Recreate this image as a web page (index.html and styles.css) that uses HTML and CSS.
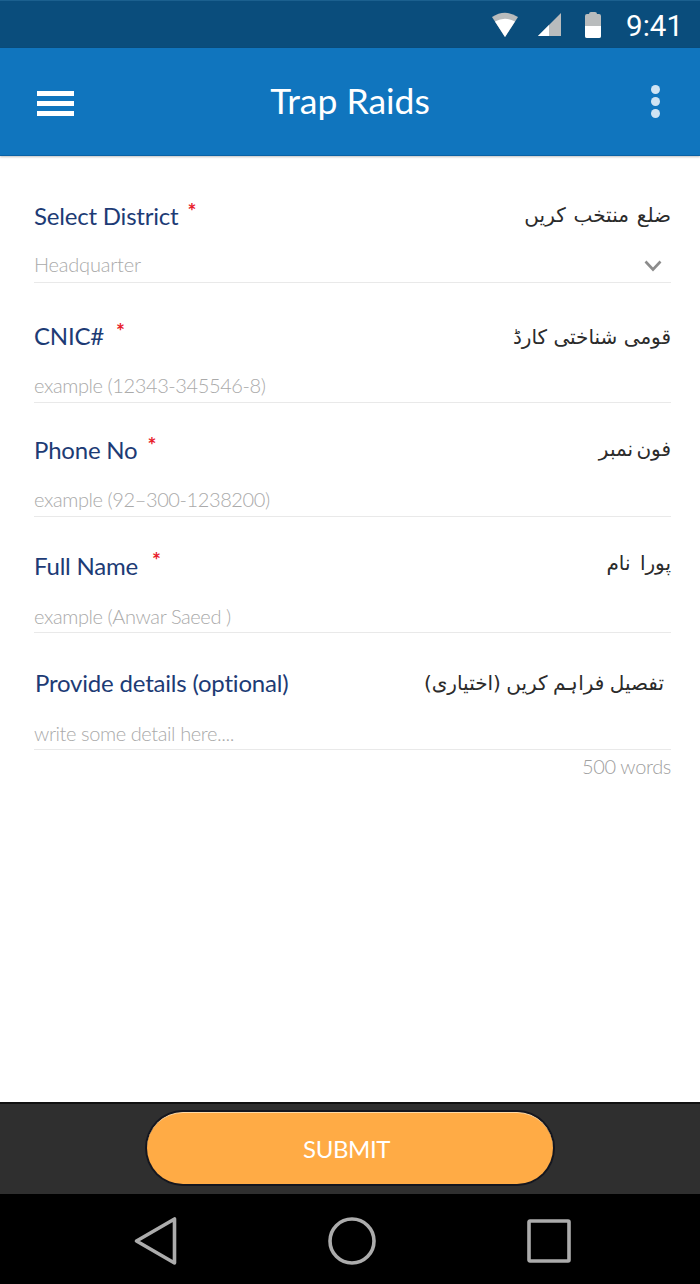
FILE: index.html
```html
<!DOCTYPE html>
<html lang="en">
<head>
    <meta charset="UTF-8">
    <meta name="viewport" content="width=device-width, initial-scale=1.0">
    <title>Trap Raids</title>
    <link rel="stylesheet" href="styles.css">
</head>
<body>
    <div class="status-bar">
        <svg class="wifi" width="26" height="25" viewBox="0 0 26 25">
            <path d="M0 5 Q13 -3.5 26 5 L13 25 Z" fill="#b9bcbd"/>
            <path d="M3 9.5 Q13 4 23 9.5 L13 25 Z" fill="#fff"/>
        </svg>
        <svg class="signal" width="23" height="23" viewBox="0 0 23 23">
            <path d="M23 0 V23 H0 Z" fill="#b9bcbd"/>
            <path d="M11 12 V23 H0 Z" fill="#fff"/>
        </svg>
        <svg class="battery" width="16" height="26" viewBox="0 0 16 26">
            <path d="M4 2 Q4 0 6 0 H10 Q12 0 12 2 H14 Q16 2 16 4 V24 Q16 26 14 26 H2 Q0 26 0 24 V4 Q0 2 2 2 Z" fill="#b9bcbd"/>
            <path d="M0 14 H16 V24 Q16 26 14 26 H2 Q0 26 0 24 Z" fill="#fff"/>
        </svg>
        <span class="time">9:41</span>
    </div>

    <header>
        <button type="button" class="menu" aria-label="Menu">
            <span></span>
            <span></span>
            <span></span>
        </button>
        <h1>Trap Raids</h1>
        <button type="button" class="more" aria-label="More options">
            <span></span>
            <span></span>
            <span></span>
        </button>
    </header>

    <main>
        <form id="raidForm">
            <div class="field district">
                <div class="label-row">
                    <label for="district">Select District</label>
                    <span class="required">*</span>
                    <span class="urdu" lang="ur" dir="rtl">ضلع منتخب کریں</span>
                </div>
                <div class="input-row">
                    <input type="text" id="district" placeholder="Headquarter" readonly>
                    <svg class="chevron" width="18" height="12" viewBox="0 0 18 12">
                        <path d="M1.5 1.5 L9 9.5 L16.5 1.5" fill="none" stroke="#8c8c8c" stroke-width="2.6"/>
                    </svg>
                </div>
            </div>

            <div class="field cnic">
                <div class="label-row">
                    <label for="cnic">CNIC#</label>
                    <span class="required">*</span>
                    <span class="urdu" lang="ur" dir="rtl">قومی شناختی کارڈ</span>
                </div>
                <div class="input-row">
                    <input type="text" id="cnic" placeholder="example (12343-345546-8)">
                </div>
            </div>

            <div class="field phone">
                <div class="label-row">
                    <label for="phone">Phone No</label>
                    <span class="required">*</span>
                    <span class="urdu" lang="ur" dir="rtl">فون نمبر</span>
                </div>
                <div class="input-row">
                    <input type="text" id="phone" placeholder="example (92–300-1238200)">
                </div>
            </div>

            <div class="field name">
                <div class="label-row">
                    <label for="fullName">Full Name</label>
                    <span class="required">*</span>
                    <span class="urdu" lang="ur" dir="rtl">پورا نام</span>
                </div>
                <div class="input-row">
                    <input type="text" id="fullName" placeholder="example (Anwar Saeed )">
                </div>
            </div>

            <div class="field details">
                <div class="label-row">
                    <label for="details">Provide details (optional)</label>
                    <span class="urdu" lang="ur" dir="rtl">تفصیل فراہم کریں (اختیاری)</span>
                </div>
                <div class="input-row">
                    <input type="text" id="details" placeholder="write some detail here....">
                </div>
            </div>
            <p class="word-count">500 words</p>
        </form>
    </main>

    <div class="submit-bar">
        <button type="submit" form="raidForm" class="submit">SUBMIT</button>
    </div>

    <nav>
        <svg class="back" width="44" height="50" viewBox="0 0 44 50">
            <path d="M40.5 3 V47 L2.5 25 Z" fill="none" stroke="#acacac" stroke-width="3.6" stroke-linejoin="round"/>
        </svg>
        <svg class="home" width="50" height="50" viewBox="0 0 50 50">
            <circle cx="25" cy="25" r="22" fill="none" stroke="#acacac" stroke-width="3.6"/>
        </svg>
        <svg class="recent" width="46" height="46" viewBox="0 0 46 46">
            <rect x="3" y="3" width="40" height="40" rx="1" fill="none" stroke="#acacac" stroke-width="3.6"/>
        </svg>
    </nav>
</body>
</html>
```
FILE: styles.css
```css
* {
    box-sizing: border-box;
}
body {
    font-family: Lato, sans-serif;
    margin: 0;
    height: 1284px;
    display: flex;
    flex-direction: column;
    background-color: #ffffff;
}
button {
    border: none;
    padding: 0;
    background: none;
    cursor: pointer;
}
.status-bar {
    height: 48px;
    padding: 0 17px 0 0;
    display: flex;
    align-items: center;
    justify-content: flex-end;
    background-color: #0a4d7c;
    border-top: 1px solid #1b608f;
}
.wifi {
    margin-right: 20px;
}
.signal {
    margin-right: 24px;
}
.battery {
    margin-right: 25px;
}
.time {
    font-family: Roboto, sans-serif;
    font-size: 29.5px;
    color: #ffffff;
    margin-top: 2px;
}
header {
    height: 108px;
    padding: 0 40px 0 37px;
    display: grid;
    grid-template-columns: 37px 1fr 37px;
    align-items: center;
    background-color: #1075be;
    border-bottom: 1px solid #0a62a5;
    box-shadow: 0 1px 2px rgba(0, 0, 0, 0.25);
}
h1 {
    margin: 0 0 2px 3px;
    font-size: 35.5px;
    font-weight: 400;
    color: #ffffff;
    text-align: center;
}
.menu {
    width: 37px;
    display: flex;
    flex-direction: column;
    gap: 5px;
    margin-top: 4px;
}
.menu span {
    height: 5px;
    background-color: #ffffff;
}
.more {
    display: flex;
    flex-direction: column;
    align-items: flex-end;
    gap: 3px;
}
.more span {
    width: 9px;
    height: 9px;
    border-radius: 50%;
    background-color: #cfe3f3;
}
main {
    flex: 1;
    padding: 44px 29px 0 34px;
}
.field {
    margin-bottom: 31px;
}
.label-row {
    height: 31px;
    padding-top: 1px;
    display: flex;
    align-items: flex-start;
    line-height: 30px;
}
label {
    font-size: 24px;
    letter-spacing: -0.2px;
    color: #1d3b75;
}
.required {
    margin: -5px 0 0 10px;
    font-size: 21px;
    font-weight: 700;
    color: #e8202a;
}
.urdu {
    margin-left: auto;
    font-family: "DejaVu Sans", sans-serif;
    font-size: 20px;
    color: #2b2b2b;
}
.input-row {
    height: 52px;
    padding-top: 16px;
    display: flex;
    align-items: center;
    border-bottom: 1px solid #e9e9e9;
}
input {
    flex: 1;
    min-width: 0;
    padding: 0;
    border: none;
    outline: none;
    background: none;
    font-family: Lato, sans-serif;
    font-size: 20px;
    font-weight: 300;
    letter-spacing: -0.4px;
    color: #555555;
}
input::placeholder {
    color: #aaaaaa;
    opacity: 1;
}
.district {
    margin-bottom: 37px;
}
.district .required {
    margin-left: 9px;
}
.district .urdu {
    margin-top: -1px;
    word-spacing: 1.5px;
}
.district .input-row {
    padding-top: 14px;
}
.district input {
    letter-spacing: -0.2px;
}
.chevron {
    margin: 5px 9px 0 0;
}
.cnic .required {
    margin-left: 12px;
}
.cnic .urdu {
    margin-top: 1px;
}
.phone {
    margin-bottom: 33px;
}
.phone .urdu {
    margin-top: -1px;
    word-spacing: -3px;
}
.name {
    margin-bottom: 34px;
}
.name .required {
    margin-left: 14px;
    margin-top: -6px;
}
.name .urdu {
    margin-top: -3px;
    word-spacing: 3px;
}
.name .input-row {
    padding-top: 18px;
}
.details {
    margin-bottom: 0;
}
.details label {
    margin-left: 1px;
}
.details .urdu {
    margin-right: 7px;
    word-spacing: -1px;
}
.details .input-row {
    padding-top: 18px;
}
.word-count {
    margin: 4px 0 0;
    text-align: right;
    font-size: 20px;
    font-weight: 300;
    letter-spacing: -0.35px;
    color: #a0a0a0;
}
.submit-bar {
    height: 92px;
    padding-top: 8px;
    background-color: #2f2f2f;
    border-top: 2px solid #111111;
    text-align: center;
}
.submit {
    width: 406px;
    height: 72px;
    padding-right: 7px;
    border-radius: 36px;
    background-color: #ffab45;
    border-top: 1px solid #ffd9a5;
    box-shadow: 0 0 0 2px #14161f;
    font-family: Lato, sans-serif;
    font-size: 24px;
    letter-spacing: -0.4px;
    color: #ffffff;
}
nav {
    height: 90px;
    padding: 3px 128px 0 134px;
    display: flex;
    align-items: center;
    justify-content: space-between;
    background-color: #000000;
}
```
